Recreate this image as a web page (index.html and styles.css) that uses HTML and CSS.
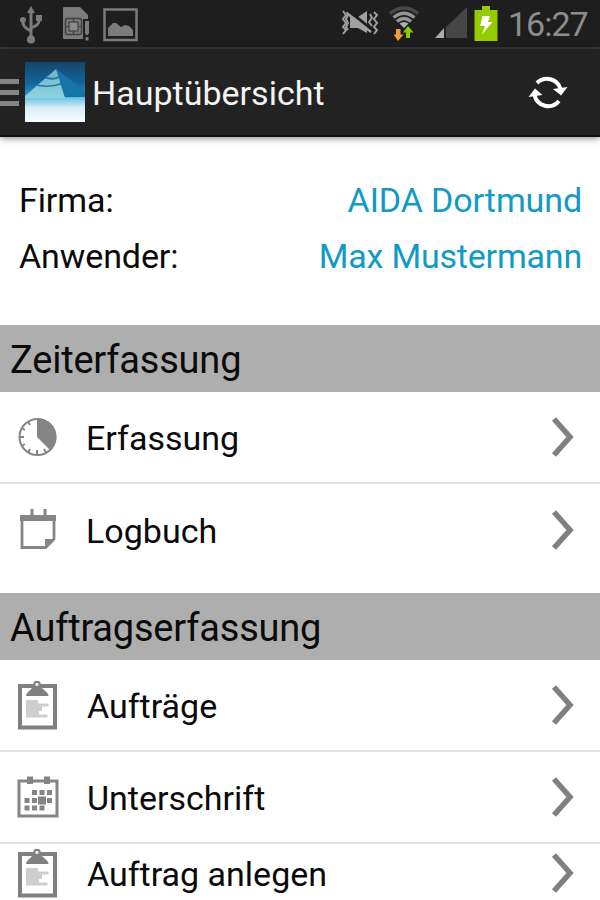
FILE: index.html
```html
<!DOCTYPE html>
<html lang="de">
<head>
    <meta charset="UTF-8">
    <meta name="viewport" content="width=device-width, initial-scale=1.0">
    <title>Hauptübersicht</title>
    <link rel="stylesheet" href="styles.css">
</head>
<body>
    <!-- Shared icons -->
    <svg class="symbols" aria-hidden="true">
        <symbol id="chevron" viewBox="0 0 24 42">
            <path d="M3 3 L19 21 L3 39" fill="none" stroke="#808080" stroke-width="5.500"/>
        </symbol>
        <symbol id="clipboard" viewBox="0 0 40 50">
            <rect x="2" y="6" width="35" height="41.500" fill="#fff" stroke="#808080" stroke-width="4"/>
            <path d="M8 16 C9 11 13 11 15 6 L23 6 C25 11 30 11 30.500 16 Z" fill="#808080"/>
            <circle cx="19" cy="4.500" r="2.800" fill="#e8e8e8" stroke="#808080" stroke-width="2"/>
            <path d="M8 20 H20 V23.500 H30.500 V26.500 H24 V31 H21 V34.500 H29.500 V37.500 H8 Z" fill="#cecece"/>
        </symbol>
    </svg>

    <div class="status-bar">
        <div class="notifications">
            <svg class="usb" width="24" height="38" viewBox="0 0 24 38">
                <g fill="none" stroke="#7b7b7b" stroke-width="3">
                    <path d="M12 4 V34"/>
                    <path d="M4 14 V17 Q4 21 12 25"/>
                    <path d="M20 12 V15 Q20 19 12 22"/>
                </g>
                <path d="M12 0 L16 7 H8 Z" fill="#7b7b7b"/>
                <circle cx="4" cy="14" r="3" fill="#7b7b7b"/>
                <rect x="17" y="9" width="6" height="6" fill="#7b7b7b"/>
                <circle cx="12" cy="33.500" r="4" fill="#7b7b7b"/>
            </svg>
            <svg class="sim" width="28" height="36" viewBox="0 0 28 36">
                <path d="M2 1 H18 L26 9 V13 H21 V33 H2 Q1 33 1 32 V2 Q1 1 2 1 Z" fill="#7b7b7b"/>
                <rect x="3.500" y="12.500" width="16" height="16" rx="2" fill="#7b7b7b" stroke="#404040" stroke-width="1.500"/>
                <rect x="7" y="16" width="9" height="9" fill="#8c8c8c" stroke="#404040" stroke-width="1.200"/>
                <path d="M11.500 12 V16 M11.500 25 V29 M3 20.500 H7 M16 20.500 H20" stroke="#404040" stroke-width="1.200"/>
                <path d="M23 15 H27 V27 L26 29 H24 L23 27 Z M23.500 31 H26.500 V34.500 H23.500 Z" fill="#7b7b7b"/>
            </svg>
            <svg class="picture" width="36" height="34" viewBox="0 0 36 34">
                <rect x="1.500" y="1.500" width="32" height="30.500" fill="none" stroke="#7b7b7b" stroke-width="2.500"/>
                <path d="M5 28 V20 L10 15 H13 L18 19 L22 17 L26 18 L30 22 V28 Z" fill="#7b7b7b"/>
            </svg>
        </div>
        <div class="indicators">
            <svg class="silent" width="38" height="26" viewBox="0 0 38 26">
                <path d="M9 7 H17 L26 1 V23 L17 18 H9 Z" fill="#a0a0a0"/>
                <path d="M8 1 L31 20" stroke="#1e1e1e" stroke-width="3"/>
                <path d="M7 4 L30 22" stroke="#a0a0a0" stroke-width="2.500"/>
                <g fill="none" stroke="#a0a0a0" stroke-width="2">
                    <path d="M2 1 L5 5 L2 9 L5 13 L2 17 L5 20 L2 24"/>
                    <path d="M6 2 L7 5 L5 9 L7 13 L5 17 L7 20"/>
                    <path d="M29 4 L31 8 L28 12 L31 16"/>
                    <path d="M33 2 L36 5 L33 9 L36 13 L33 17 L36 20 L33 24"/>
                </g>
            </svg>
            <svg class="wifi" width="30" height="36" viewBox="0 0 30 36">
                <g fill="none" stroke-width="3.500">
                    <path d="M1 7.500 Q15 -3.500 29 7.500" stroke="#494949"/>
                    <path d="M4.500 11.500 Q15 3 25.500 11.500" stroke="#959595"/>
                    <path d="M8 15.500 Q15 9.500 22 15.500" stroke="#959595"/>
                </g>
                <path d="M10.500 17.500 Q15 14.500 19.500 17.500 L15 22 Z" fill="#b0b0b0"/>
                <path d="M7 23 H11.500 V28.500 H14.500 L9 35 L4.500 28.500 H7 Z" fill="#f79a38"/>
                <path d="M17 32 H21 V26.500 H24.500 L19 20 L14 26.500 H17 Z" fill="#8ccb00"/>
            </svg>
            <svg class="signal" width="34" height="32" viewBox="0 0 34 32">
                <path d="M12 20 L33 0 V31 H12 Z" fill="#464646"/>
                <path d="M1 31 L10 21 V31 Z" fill="#aaa"/>
            </svg>
            <svg class="battery" width="24" height="36" viewBox="0 0 24 36">
                <path d="M8 0 H16 V4 H23.500 V35 H0.500 V4 H8 Z" fill="#94cc00"/>
                <path d="M8.500 10 H16 L14 16 H18.500 L8 28.500 L11 20 H6 Z" fill="#fff"/>
            </svg>
            <span class="time">16:27</span>
        </div>
    </div>

    <header class="action-bar">
        <div class="drawer-lines"><i></i><i></i><i></i></div>
        <svg class="logo" width="60" height="60" viewBox="0 0 60 60">
            <defs>
                <linearGradient id="sky" x1="0" y1="0" x2="0" y2="1">
                    <stop offset="0" stop-color="#154668"/>
                    <stop offset="0.350" stop-color="#13639c"/>
                    <stop offset="0.560" stop-color="#2397c8"/>
                    <stop offset="0.600" stop-color="#6cc3e6"/>
                    <stop offset="0.760" stop-color="#d8eef7"/>
                    <stop offset="1" stop-color="#f8fdff"/>
                </linearGradient>
                <linearGradient id="stone" x1="0" y1="0" x2="0" y2="1">
                    <stop offset="0" stop-color="#69b5cf"/>
                    <stop offset="1" stop-color="#91d4df"/>
                </linearGradient>
            </defs>
            <rect width="60" height="60" fill="url(#sky)"/>
            <path d="M31 7 L60 29 V35 H39 Z" fill="#1774aa"/>
            <path d="M31 7 L40 36 H0 V34 Z" fill="url(#stone)"/>
            <path d="M22 15 Q29 17 34 14 L34 16 Q28 19 20 16.500 Z M13 22.500 Q26 25 36 21 L36.500 22.500 Q26 26.500 12 24 Z" fill="#29779a"/>
        </svg>
        <h1>Hauptübersicht</h1>
        <svg class="refresh" width="40" height="34" viewBox="0 0 40 34">
            <g fill="none" stroke="#fff" stroke-width="4">
                <path d="M9 8 A14 14 0 0 1 32.500 14"/>
                <path d="M31 26 A14 14 0 0 1 6.500 20"/>
            </g>
            <path d="M25 14 L39.500 12 L33 20.500 Z M0.500 22 L7 13.500 L14.500 20 Z" fill="#fff"/>
        </svg>
    </header>

    <main>
        <dl class="account">
            <div class="account-row"><dt>Firma:</dt><dd class="company">AIDA Dortmund</dd></div>
            <div class="account-row"><dt>Anwender:</dt><dd class="user">Max Mustermann</dd></div>
        </dl>

        <h2>Zeiterfassung</h2>
        <ul>
            <li>
                <svg class="icon" width="40" height="40" viewBox="0 0 40 40">
                    <circle cx="20.500" cy="20" r="18" fill="#fff" stroke="#858585" stroke-width="2"/>
                    <path d="M20 20 V1.500 A18.500 18.500 0 0 1 33.500 33.500 Z" fill="#858585"/>
                    <path d="M20 38 V33 M2 20 H7 M11 4.500 L13 8 M4.500 11 L8 13 M4.500 29 L8 27 M11 35.500 L13 32 M29 35.500 L27 32" stroke="#858585" stroke-width="2"/>
                </svg>
                <span>Erfassung</span>
                <svg class="chevron"><use href="#chevron"/></svg>
            </li>
            <li>
                <svg class="icon" width="40" height="44" viewBox="0 0 40 44">
                    <path d="M5 10 V39.500 H28 L37 31 V10" fill="#fff" stroke="#858585" stroke-width="2.800"/>
                    <path d="M3 7 H39 V13 H3 Z M28 31 H37 V33 L29 41 H28 Z" fill="#858585"/>
                    <path d="M15 1 V8 M28 1 V8" stroke="#858585" stroke-width="3"/>
                </svg>
                <span>Logbuch</span>
                <svg class="chevron"><use href="#chevron"/></svg>
            </li>
        </ul>

        <h2>Auftragserfassung</h2>
        <ul>
            <li>
                <svg class="icon clip"><use href="#clipboard"/></svg>
                <span>Aufträge</span>
                <svg class="chevron"><use href="#chevron"/></svg>
            </li>
            <li>
                <svg class="icon calendar" width="42" height="42" viewBox="0 0 42 42">
                    <rect x="2" y="5" width="38" height="35" fill="#fff" stroke="#858585" stroke-width="3"/>
                    <path d="M10 0.500 H16 V8 H10 Z M27 0.500 H33 V8 H27 Z" fill="#858585"/>
                    <path d="M15 14 h5 v5 h-5z M22.500 14 h5 v5 h-5z M30 14 h5 v5 h-5z M7.500 22 h5 v5 h-5z M15 22 h5 v5 h-5z M21 20.500 h8 v8 h-8z M30 22 h5 v5 h-5z M7.500 29.500 h5 v5 h-5z M15 29.500 h5 v5 h-5z M22.500 29.500 h5 v5 h-5z" fill="#858585"/>
                </svg>
                <span>Unterschrift</span>
                <svg class="chevron"><use href="#chevron"/></svg>
            </li>
            <li class="short">
                <svg class="icon clip"><use href="#clipboard"/></svg>
                <span>Auftrag anlegen</span>
                <svg class="chevron"><use href="#chevron"/></svg>
            </li>
        </ul>
    </main>
</body>
</html>
```
FILE: styles.css
```css
* {
    margin: 0;
    padding: 0;
    box-sizing: border-box;
}

body {
    width: 600px;
    height: 900px;
    overflow: hidden;
    background: #fff;
    color: #0a0a0a;
    font-family: Roboto, sans-serif;
    font-size: 34px;
}

svg {
    display: block;
    flex: none;
}

.symbols {
    display: none;
}

/* Status bar */
.status-bar {
    display: flex;
    justify-content: space-between;
    height: 49px;
    background: #1e1e1e;
    border-bottom: 2px solid #393939;
}

.notifications,
.indicators {
    display: flex;
}

.usb {
    margin: 6px 0 0 19px;
}

.sim {
    margin: 6px 0 0 19px;
}

.picture {
    margin: 8px 0 0 13px;
}

.silent {
    margin-top: 10px;
}

.wifi {
    margin: 6px 0 0 10px;
}

.signal {
    margin: 7px 0 0 15px;
}

.battery {
    margin: 6px 0 0 6px;
}

.time {
    width: 102px;
    padding-left: 10px;
    line-height: 48px;
    color: #8d8d8d;
    font-size: 34px;
    letter-spacing: -1px;
    white-space: nowrap;
}

/* Action bar */
.action-bar {
    display: flex;
    align-items: center;
    height: 88px;
    background: #222;
    border-bottom: 2px solid #111;
    box-shadow: 0 1px 7px rgba(0, 0, 0, 0.5);
}

.drawer-lines {
    display: flex;
    flex-direction: column;
    gap: 6px;
    width: 19px;
    margin-right: 6px;
}

.drawer-lines i {
    height: 5px;
    background: #858585;
}

.action-bar h1 {
    flex: 1;
    margin-left: 7px;
    padding-top: 2px;
    color: #f3f3f3;
    font-size: 34px;
    font-weight: 400;
}

.refresh {
    margin-right: 32px;
}

/* Account details */
.account {
    height: 188px;
    padding: 35px 18px 0 19px;
    letter-spacing: -0.1px;
}

.account-row {
    display: flex;
    justify-content: space-between;
    height: 56px;
    line-height: 57px;
}

.account dd {
    color: #1299c6;
}

.company {
    letter-spacing: -0.1px;
}

.user {
    letter-spacing: -0.2px;
}

/* Lists */
h2 {
    height: 67px;
    padding-left: 10px;
    background: #aeaeae;
    font-size: 38px;
    font-weight: 400;
    letter-spacing: -0.2px;
    line-height: 71px;
}

ul {
    list-style: none;
}

li {
    display: flex;
    align-items: center;
    height: 92px;
    padding: 0 25px 0 17px;
    border-bottom: 2px solid #e3e3e3;
}

li:last-child {
    height: 109px;
    padding-bottom: 18px;
    border-bottom: 0;
}

li.short:last-child {
    height: 58px;
    padding-bottom: 0;
}

li span {
    flex: 1;
    line-height: 40px;
    padding-top: 2px;
}

.icon {
    margin-right: 29px;
}

.clip {
    width: 40px;
    height: 50px;
    margin-left: 1px;
}

.calendar {
    margin-right: 28px;
}

.chevron {
    width: 24px;
    height: 42px;
}
```
